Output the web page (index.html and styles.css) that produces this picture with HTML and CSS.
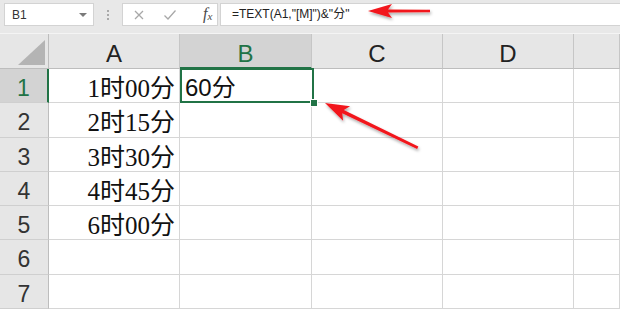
FILE: index.html
```html
<!DOCTYPE html>
<html lang="zh-CN">
<head>
    <meta charset="UTF-8">
    <title>TEXT 分钟</title>
    <link rel="stylesheet" href="styles.css">
</head>
<body>
    <div class="window">
        <div class="toolbar">
            <div class="name-box">
                <span>B1</span>
                <span class="drop"></span>
            </div>
            <div class="grip"><i></i><i></i><i></i></div>
            <div class="fx-box">
                <svg class="icon" width="12" height="12" viewBox="0 0 12 12"><path d="M2 2 L10 10 M10 2 L2 10" stroke="#a8a8a8" stroke-width="1.3" fill="none"/></svg>
                <svg class="icon" width="14" height="12" viewBox="0 0 14 12"><path d="M1.5 6.5 L5 10 L12.5 1.5" stroke="#a8a8a8" stroke-width="1.3" fill="none"/></svg>
                <span class="fx">f<sub>x</sub></span>
            </div>
            <div class="formula">=TEXT(A1,"[M]")&amp;"分"</div>
        </div>

        <div class="sheet">
            <div class="corner"><svg width="28" height="25" viewBox="0 0 28 25"><polygon points="27,0 27,25 0,25" fill="#b4b4b4"/></svg></div>
            <div class="ch">A</div>
            <div class="ch active">B</div>
            <div class="ch">C</div>
            <div class="ch">D</div>
            <div class="ch"></div>

            <div class="rh active">1</div>
            <div class="cell time">1时00分</div>
            <div class="cell val selected">60分</div>
            <div class="cell"></div>
            <div class="cell"></div>
            <div class="cell"></div>

            <div class="rh">2</div>
            <div class="cell time">2时15分</div>
            <div class="cell"></div>
            <div class="cell"></div>
            <div class="cell"></div>
            <div class="cell"></div>

            <div class="rh">3</div>
            <div class="cell time">3时30分</div>
            <div class="cell"></div>
            <div class="cell"></div>
            <div class="cell"></div>
            <div class="cell"></div>

            <div class="rh">4</div>
            <div class="cell time">4时45分</div>
            <div class="cell"></div>
            <div class="cell"></div>
            <div class="cell"></div>
            <div class="cell"></div>

            <div class="rh">5</div>
            <div class="cell time">6时00分</div>
            <div class="cell"></div>
            <div class="cell"></div>
            <div class="cell"></div>
            <div class="cell"></div>

            <div class="rh">6</div>
            <div class="cell"></div>
            <div class="cell"></div>
            <div class="cell"></div>
            <div class="cell"></div>
            <div class="cell"></div>

            <div class="rh">7</div>
            <div class="cell"></div>
            <div class="cell"></div>
            <div class="cell"></div>
            <div class="cell"></div>
            <div class="cell"></div>
        </div>

        <!-- red call-out arrows drawn over the screenshot -->
        <svg class="arrows" width="620" height="309" viewBox="0 0 620 309">
            <defs>
                <filter id="shade" x="-20%" y="-50%" width="140%" height="200%">
                    <feDropShadow dx="1" dy="2" stdDeviation="1.5" flood-color="#000" flood-opacity="0.35"/>
                </filter>
            </defs>
            <g filter="url(#shade)" fill="#f2161c">
                <polygon transform="translate(368,11)" points="0,0 24,-7 20,-1.6 62,-1.2 62,1.2 20,1.6 24,7"/>
                <polygon transform="translate(325,103) rotate(25.8)" points="0,0 24,-8 20,-1.8 103,-1.4 103,1.4 20,1.8 24,8"/>
            </g>
        </svg>
    </div>
</body>
</html>
```

FILE: styles.css
```css
body {
    margin: 0;
    background-color: #ffffff;
}
.window {
    position: relative;
    width: 620px;
    height: 309px;
    overflow: hidden;
    font-family: "Liberation Sans", "Noto Sans CJK SC", sans-serif;
}
.toolbar {
    display: flex;
    align-items: flex-start;
    height: 34px;
    padding: 3px 0 0 4px;
    box-sizing: border-box;
    background-color: #e8e8e8;
    border-bottom: 1px solid #f4f4f4;
}
.name-box {
    display: flex;
    align-items: center;
    justify-content: space-between;
    width: 90px;
    height: 23px;
    padding: 0 6px 0 7px;
    box-sizing: border-box;
    background-color: #fff;
    border: 1px solid #d3d3d3;
    font-size: 12px;
    color: #333;
}
.drop {
    width: 0;
    height: 0;
    border-left: 4px solid transparent;
    border-right: 4px solid transparent;
    border-top: 4px solid #7a7a7a;
}
.grip {
    display: flex;
    flex-direction: column;
    gap: 2px;
    width: 28px;
    align-items: center;
    padding-top: 7px;
}
.grip i {
    width: 2px;
    height: 2px;
    background-color: #a9a9a9;
}
.fx-box {
    display: flex;
    align-items: center;
    width: 96px;
    height: 23px;
    padding-left: 10px;
    box-sizing: border-box;
    gap: 18px;
    background-color: #fff;
    border: 1px solid #d3d3d3;
}
.fx {
    font-family: "Liberation Serif", serif;
    font-style: italic;
    font-size: 16px;
    line-height: 16px;
    color: #4a4a4a;
    margin-left: 8px;
}
.fx sub {
    font-size: 11px;
    vertical-align: -1px;
}
.formula {
    flex: 1;
    height: 23px;
    margin-left: 2px;
    padding-left: 11px;
    box-sizing: border-box;
    background-color: #fff;
    border: 1px solid #d3d3d3;
    border-right: none;
    font-size: 12px;
    line-height: 21px;
    color: #222;
}
.sheet {
    display: grid;
    grid-template-columns: 49px 131px 132px 131px 131px 46px;
    grid-template-rows: 35px 34px 35px 34px 34px 34px 35px 34px;
}
.sheet > div {
    box-sizing: border-box;
    position: relative;
}
.corner {
    background-color: #e6e6e6;
    border-right: 1px solid #bdbdbd;
    border-bottom: 1px solid #bdbdbd;
    display: flex;
    align-items: flex-end;
    justify-content: flex-end;
    padding: 0 2px 3px 0;
}
.corner svg {
    display: block;
}
.ch {
    background-color: #e6e6e6;
    border-right: 1px solid #c6c6c6;
    border-bottom: 1px solid #bdbdbd;
    text-align: center;
    font-size: 24px;
    line-height: 40px;
    color: #222;
}
.ch.active {
    background-color: #d3d3d3;
    border-bottom: 2px solid #217346;
    color: #217346;
}
.rh {
    background-color: #e6e6e6;
    border-right: 1px solid #bdbdbd;
    border-bottom: 1px solid #cfcfcf;
    text-align: center;
    font-size: 23px;
    line-height: 39px;
    color: #333;
}
.rh.active {
    background-color: #d3d3d3;
    border-right: 2px solid #217346;
    color: #217346;
}
.cell {
    border-right: 1px solid #d6d6d6;
    border-bottom: 1px solid #d6d6d6;
    font-size: 24px;
    line-height: 40px;
    white-space: nowrap;
    overflow: visible;
    color: #111;
}
.time {
    text-align: right;
    padding-right: 4px;
    font-family: "Liberation Serif", "Noto Sans CJK SC", serif;
    font-size: 25px;
}
.val {
    padding-left: 5px;
}
.selected {
    z-index: 1;
    box-shadow: inset 0 0 0 2px #217346;
    margin: -1px -2px 0 0;
    border-bottom: none;
    border-right: none;
}
.selected::after {
    content: "";
    position: absolute;
    right: -4px;
    bottom: -4px;
    width: 6px;
    height: 6px;
    background-color: #217346;
    border: 1px solid #fff;
}
.arrows {
    position: absolute;
    left: 0;
    top: 0;
    pointer-events: none;
}
```
